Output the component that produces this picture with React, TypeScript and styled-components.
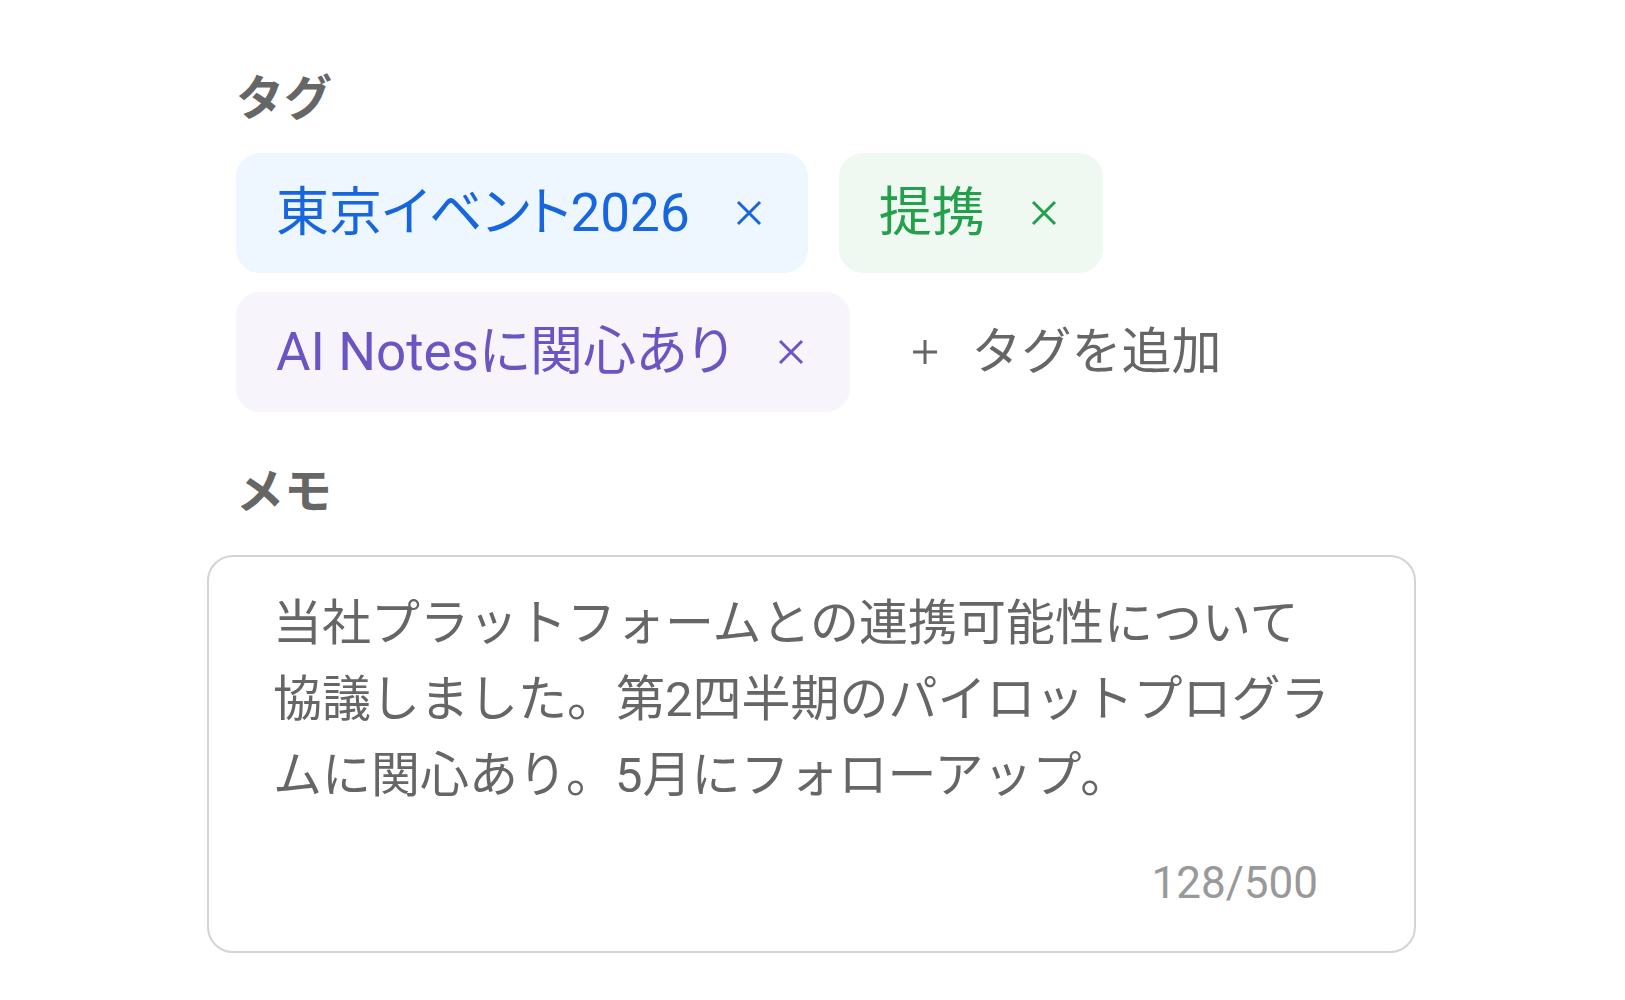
import styled, { createGlobalStyle } from 'styled-components';

const GlobalStyle = createGlobalStyle`
    body {
        margin: 0;
        background: #fff;
        font-family: Roboto, "Noto Sans CJK JP", sans-serif;
    }
`;

type Tone = 'blue' | 'green' | 'purple';

const tones: Record<Tone, { bg: string; fg: string }> = {
    blue: { bg: '#eef6ff', fg: '#1766de' },
    green: { bg: '#eff9f2', fg: '#24a04d' },
    purple: { bg: '#f7f4fc', fg: '#6a55c2' },
};

const Page = styled.main`
    width: 1209px;
    padding: 68px 0 40px 207px;
`;

const Section = styled.section<{ gap: number; offset?: number }>`
    display: flex;
    flex-direction: column;
    gap: ${p => p.gap}px;
    margin-top: ${p => p.offset ?? 0}px;
`;

const Label = styled.h2`
    margin: 0 0 0 29px;
    font-size: 48px;
    line-height: 62px;
    font-weight: 700;
    color: #666;
`;

const TagList = styled.div`
    display: flex;
    flex-wrap: wrap;
    align-items: center;
    column-gap: 31px;
    row-gap: 19px;
    margin-left: 29px;
`;

const Tag = styled.span<{ tone: Tone }>`
    display: inline-flex;
    align-items: center;
    gap: 46px;
    padding: 24px 46px 24px 40px;
    border-radius: 24px;
    font-size: 53px;
    line-height: 72px;
    font-feature-settings: "palt";
    background: ${p => tones[p.tone].bg};
    color: ${p => tones[p.tone].fg};
`;

const Remove = styled.button`
    display: flex;
    border: none;
    background: none;
    padding: 0;
    color: inherit;
    cursor: pointer;
`;

const AddTag = styled.button`
    display: inline-flex;
    align-items: center;
    gap: 34px;
    border: none;
    background: none;
    padding: 0 0 0 31px;
    color: #666;
    font-family: Roboto, "Noto Sans CJK JP", sans-serif;
    font-size: 50px;
    line-height: 72px;
    cursor: pointer;
`;

const MemoBox = styled.div`
    border: 2px solid #d4d4d4;
    border-radius: 26px;
    padding: 29px 72px 38px 64px;
`;

const MemoText = styled.p`
    margin: 0;
    font-size: 49px;
    line-height: 76px;
    color: #666;
`;

const Counter = styled.div`
    margin-top: 39px;
    padding-right: 24px;
    text-align: right;
    font-size: 44px;
    line-height: 60px;
    color: #999;
`;

const CrossIcon = () => (
    <svg width="26" height="26" viewBox="0 0 26 26" fill="none" stroke="currentColor" strokeWidth="3">
        <path d="M2 2 L24 24 M24 2 L2 24" />
    </svg>
);

const PlusIcon = () => (
    <svg width="26" height="26" viewBox="0 0 26 26" fill="none" stroke="currentColor" strokeWidth="3">
        <path d="M13 1 V25 M1 13 H25" />
    </svg>
);

const tags: { label: string; tone: Tone }[] = [
    { label: '東京イベント2026', tone: 'blue' },
    { label: '提携', tone: 'green' },
    { label: 'AI Notesに関心あり', tone: 'purple' },
];

const memo = '当社プラットフォームとの連携可能性について協議しました。第2四半期のパイロットプログラムに関心あり。5月にフォローアップ。';

export default function App() {
    return (
        <>
            <GlobalStyle />
            <Page>
                <Section gap={23}>
                    <Label>タグ</Label>
                    <TagList>
                        {tags.map(t => (
                            <Tag key={t.label} tone={t.tone}>
                                {t.label}
                                <Remove aria-label="削除"><CrossIcon /></Remove>
                            </Tag>
                        ))}
                        <AddTag>
                            <PlusIcon />
                            タグを追加
                        </AddTag>
                    </TagList>
                </Section>
                <Section gap={32} offset={49}>
                    <Label>メモ</Label>
                    <MemoBox>
                        <MemoText>{memo}</MemoText>
                        <Counter>128/500</Counter>
                    </MemoBox>
                </Section>
            </Page>
        </>
    );
}
